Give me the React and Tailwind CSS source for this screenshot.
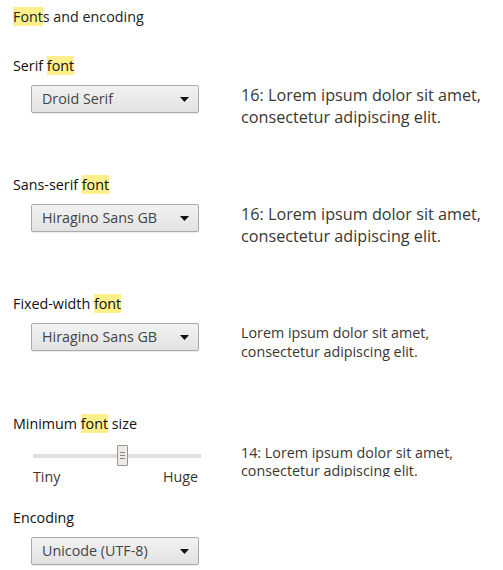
const font = { fontFamily: '"Open Sans", "Noto Sans", sans-serif' };

const Mark = ({ children }) => <span className="bg-[#fff08c]">{children}</span>;

const FakeSelect = ({ value }) => (
  <div className="flex h-[28px] w-[168px] shrink-0 items-center justify-between rounded-[2px] border border-[#aaaaaa] bg-gradient-to-b from-[#f2f2f2] to-[#e2e2e2] pl-[10px] pr-[8px] text-[14.3px] text-[#444] shadow-[0_1px_1px_rgba(0,0,0,0.08)]">
    <span>{value}</span>
    <svg width="9" height="5" viewBox="0 0 9 5" className="mr-[1px]">
      <path d="M0 0h9L4.5 5z" fill="#111" />
    </svg>
  </div>
);

const Section = ({ label, className, children }) => (
  <div className={className}>
    <div className="h-[18px] leading-[18px] text-[14.3px] text-[#111]">{label}</div>
    <div className="mt-[10px] flex items-start pl-[18px]">{children}</div>
  </div>
);

const App = () => {
  return (
    <div style={font} className="h-[570px] w-[503px] overflow-hidden bg-white px-[13px] pt-[8px]">
      <div className="h-[18px] leading-[18px] text-[14.3px] text-[#222]">
        <Mark>Font</Mark>s and encoding
      </div>

      <Section className="mt-[31px] h-[119px]" label={<>Serif <Mark>font</Mark></>}>
        <FakeSelect value="Droid Serif" />
        <p className="ml-[42px] mt-[-1px] text-[16.2px] leading-[22px] text-[#3a3632]">
          16: Lorem ipsum dolor sit amet,
          <br />
          consectetur adipiscing elit.
        </p>
      </Section>

      <Section className="h-[119px]" label={<>Sans-serif <Mark>font</Mark></>}>
        <FakeSelect value="Hiragino Sans GB" />
        <p className="ml-[42px] mt-[-1px] text-[16.2px] leading-[22px] text-[#3a3632]">
          16: Lorem ipsum dolor sit amet,
          <br />
          consectetur adipiscing elit.
        </p>
      </Section>

      <Section className="h-[120px]" label={<>Fixed-width <Mark>font</Mark></>}>
        <FakeSelect value="Hiragino Sans GB" />
        <p className="ml-[42px] mt-[1px] text-[14.3px] leading-[18.5px] text-[#3a3632]">
          Lorem ipsum dolor sit amet,
          <br />
          consectetur adipiscing elit.
        </p>
      </Section>

      <div className="h-[94px]">
        <div className="h-[18px] leading-[18px] text-[14.3px] text-[#111]">
          Minimum <Mark>font</Mark> size
        </div>
        <div className="mt-[12px] flex items-start">
          <div className="ml-[20px] w-[168px] shrink-0">
            <div className="relative flex h-[21px] items-center">
              <div className="h-[4px] w-full bg-[#e3dfd8]" />
              <div className="absolute left-[84px] top-0 flex h-[21px] w-[11px] flex-col items-center justify-center gap-[2px] rounded-[1px] border border-[#9a9590] bg-[#eeebe6]">
                <span className="h-px w-[5px] bg-[#8a8580]" />
                <span className="h-px w-[5px] bg-[#8a8580]" />
                <span className="h-px w-[5px] bg-[#8a8580]" />
              </div>
            </div>
            <div className="mt-[2px] flex justify-between pr-[3px] text-[14.3px] leading-[18px] text-[#3a3632]">
              <span>Tiny</span>
              <span>Huge</span>
            </div>
          </div>
          <p className="ml-[40px] mt-[-1px] h-[33px] overflow-hidden text-[14.3px] leading-[17.5px] text-[#3a3632]">
            14: Lorem ipsum dolor sit amet,
            <br />
            consectetur adipiscing elit.
          </p>
        </div>
      </div>

      <Section label="Encoding">
        <FakeSelect value="Unicode (UTF-8)" />
      </Section>
    </div>
  );
};

export default App;
